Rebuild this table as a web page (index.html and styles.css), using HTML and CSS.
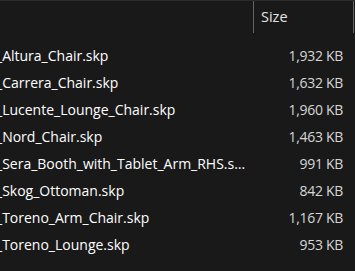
FILE: index.html
```html
<!DOCTYPE html>
<html>
<head>
<meta charset="utf-8">
<link rel="stylesheet" href="styles.css">
</head>
<body>
<div class="pane">
  <div class="header">
    <div class="hcol hname"></div>
    <div class="hcol hsize">Size</div>
  </div>
  <div class="list">
    <div class="row"><div class="name">_Altura_Chair.skp</div><div class="size">1,932 KB</div></div>
    <div class="row"><div class="name">_Carrera_Chair.skp</div><div class="size">1,632 KB</div></div>
    <div class="row"><div class="name">_Lucente_Lounge_Chair.skp</div><div class="size">1,960 KB</div></div>
    <div class="row"><div class="name">_Nord_Chair.skp</div><div class="size">1,463 KB</div></div>
    <div class="row"><div class="name">_Sera_Booth_with_Tablet_Arm_RHS.skp</div><div class="size">991 KB</div></div>
    <div class="row"><div class="name">_Skog_Ottoman.skp</div><div class="size">842 KB</div></div>
    <div class="row"><div class="name">_Toreno_Arm_Chair.skp</div><div class="size">1,167 KB</div></div>
    <div class="row"><div class="name">_Toreno_Lounge.skp</div><div class="size">953 KB</div></div>
  </div>
</div>
</body>
</html>
```
FILE: styles.css
```css
html, body {
  margin: 0;
  padding: 0;
  background: #191919;
}
body {
  width: 355px;
  height: 271px;
  overflow: hidden;
  font-family: "Open Sans", "Noto Sans", sans-serif;
  font-size: 14px;
}
.pane {
  border-top: 1px solid #2b2b2b;
}
.header {
  display: flex;
  height: 32px;
}
.hcol {
  border-right: 1px solid #636363;
  box-sizing: border-box;
  display: flex;
  align-items: center;
  color: #e4e4e4;
}
.hname {
  width: 254px;
}
.hsize {
  width: 100px;
  padding-left: 7px;
  padding-bottom: 1px;
  font-size: 14.5px;
}
.list {
  padding-top: 9px;
}
.row {
  display: flex;
  height: 27px;
  line-height: 27px;
}
.name {
  width: 250px;
  margin-left: -4px;
  overflow: hidden;
  white-space: nowrap;
  text-overflow: ellipsis;
  color: #ffffff;
}
.size {
  width: 97px;
  text-align: right;
  color: #d6d6d6;
  white-space: nowrap;
  letter-spacing: -0.3px;
}
```
